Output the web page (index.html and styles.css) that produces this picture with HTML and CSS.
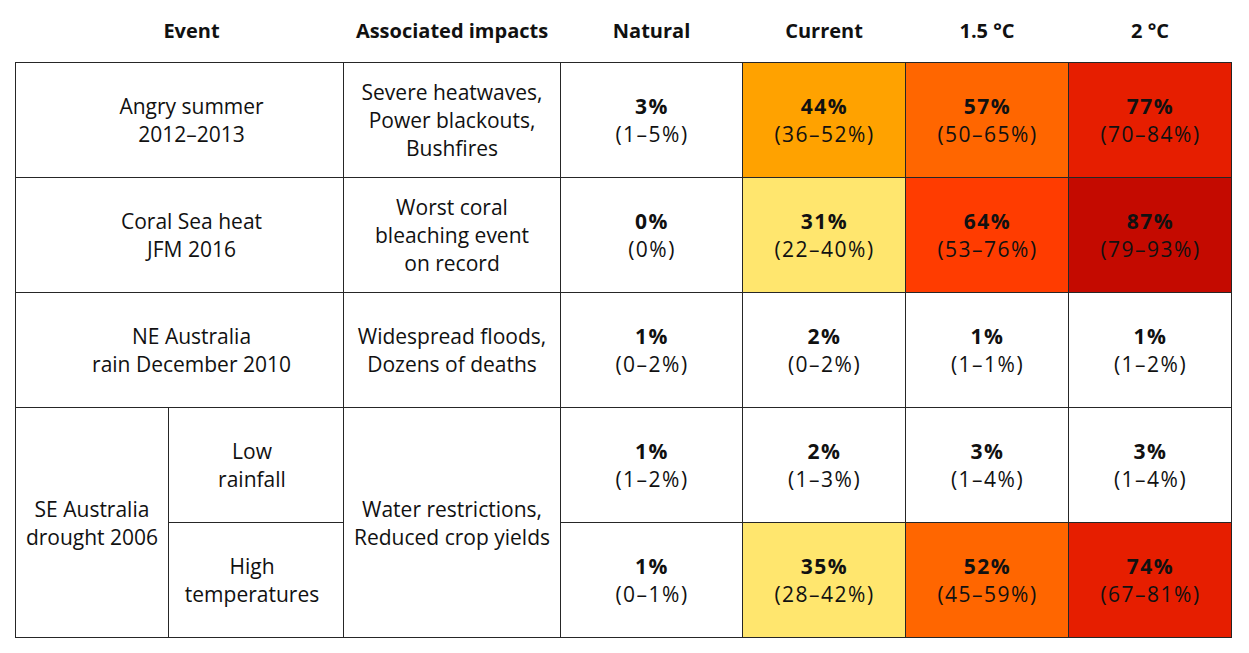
FILE: index.html
```html
<!DOCTYPE html>
<html>
<head>
<meta charset="utf-8">
<link rel="stylesheet" href="styles.css">
</head>
<body>
<table class="grid">
  <colgroup>
    <col class="c-sub1"><col class="c-sub2"><col class="c-imp"><col class="c-nat"><col class="c-val"><col class="c-val"><col class="c-val">
  </colgroup>
  <thead>
    <tr class="head">
      <th colspan="2" class="h-event">Event</th>
      <th>Associated impacts</th>
      <th>Natural</th>
      <th>Current</th>
      <th>1.5 °C</th>
      <th>2 °C</th>
    </tr>
  </thead>
  <tbody>
    <tr>
      <td colspan="2" class="event">Angry summer<br>2012–2013</td>
      <td>Severe heatwaves,<br>Power blackouts,<br>Bushfires</td>
      <td class="v"><b>3%</b><br>(1–5%)</td>
      <td class="v amber"><b>44%</b><br>(36–52%)</td>
      <td class="v orange"><b>57%</b><br>(50–65%)</td>
      <td class="v red"><b>77%</b><br>(70–84%)</td>
    </tr>
    <tr>
      <td colspan="2" class="event">Coral Sea heat<br>JFM 2016</td>
      <td>Worst coral<br>bleaching event<br>on record</td>
      <td class="v"><b>0%</b><br>(0%)</td>
      <td class="v yellow"><b>31%</b><br>(22–40%)</td>
      <td class="v vermilion"><b>64%</b><br>(53–76%)</td>
      <td class="v crimson"><b>87%</b><br>(79–93%)</td>
    </tr>
    <tr>
      <td colspan="2" class="event">NE Australia<br>rain December 2010</td>
      <td>Widespread floods,<br>Dozens of deaths</td>
      <td class="v"><b>1%</b><br>(0–2%)</td>
      <td class="v"><b>2%</b><br>(0–2%)</td>
      <td class="v"><b>1%</b><br>(1–1%)</td>
      <td class="v"><b>1%</b><br>(1–2%)</td>
    </tr>
    <tr>
      <td rowspan="2" class="drought">SE Australia<br>drought 2006</td>
      <td class="sub">Low<br>rainfall</td>
      <td rowspan="2">Water restrictions,<br>Reduced crop yields</td>
      <td class="v"><b>1%</b><br>(1–2%)</td>
      <td class="v"><b>2%</b><br>(1–3%)</td>
      <td class="v"><b>3%</b><br>(1–4%)</td>
      <td class="v"><b>3%</b><br>(1–4%)</td>
    </tr>
    <tr>
      <td class="sub">High<br>temperatures</td>
      <td class="v"><b>1%</b><br>(0–1%)</td>
      <td class="v yellow"><b>35%</b><br>(28–42%)</td>
      <td class="v orange"><b>52%</b><br>(45–59%)</td>
      <td class="v red"><b>74%</b><br>(67–81%)</td>
    </tr>
  </tbody>
</table>
</body>
</html>
```

FILE: styles.css
```css
html, body {
  margin: 0;
  padding: 0;
  background: #ffffff;
}

body {
  font-family: "Open Sans", "Liberation Sans", sans-serif;
  color: #111111;
}

.grid {
  margin-left: 15px;
  border-collapse: collapse;
  table-layout: fixed;
  width: 1217px;
  font-size: 21px;
  line-height: 28px;
}

.c-sub1 { width: 153px; }
.c-sub2 { width: 175px; }
.c-imp { width: 217px; }
.c-nat { width: 182px; }
.c-val { width: 163px; }

.head th {
  height: 61px;
  padding: 0 0 1px 0;
  font-weight: 700;
  font-size: 20px;
  text-align: center;
  vertical-align: middle;
  border: none;
}

.head .h-event {
  padding-left: 24px;
}

.grid td {
  border: 1px solid #262626;
  height: 114px;
  padding: 0;
  text-align: center;
  vertical-align: middle;
}

.grid td.event {
  padding-left: 24px;
}

.grid td.sub {
  padding-right: 8px;
}

.grid td.v {
  letter-spacing: 1.5px;
  padding-left: 1px;
}

.grid b {
  font-weight: 700;
}

.amber { background: #ffa200; }
.orange { background: #ff6600; }
.red { background: #e61e00; }
.yellow { background: #ffe66e; }
.vermilion { background: #ff3c00; }
.crimson { background: #c40a00; }
```
